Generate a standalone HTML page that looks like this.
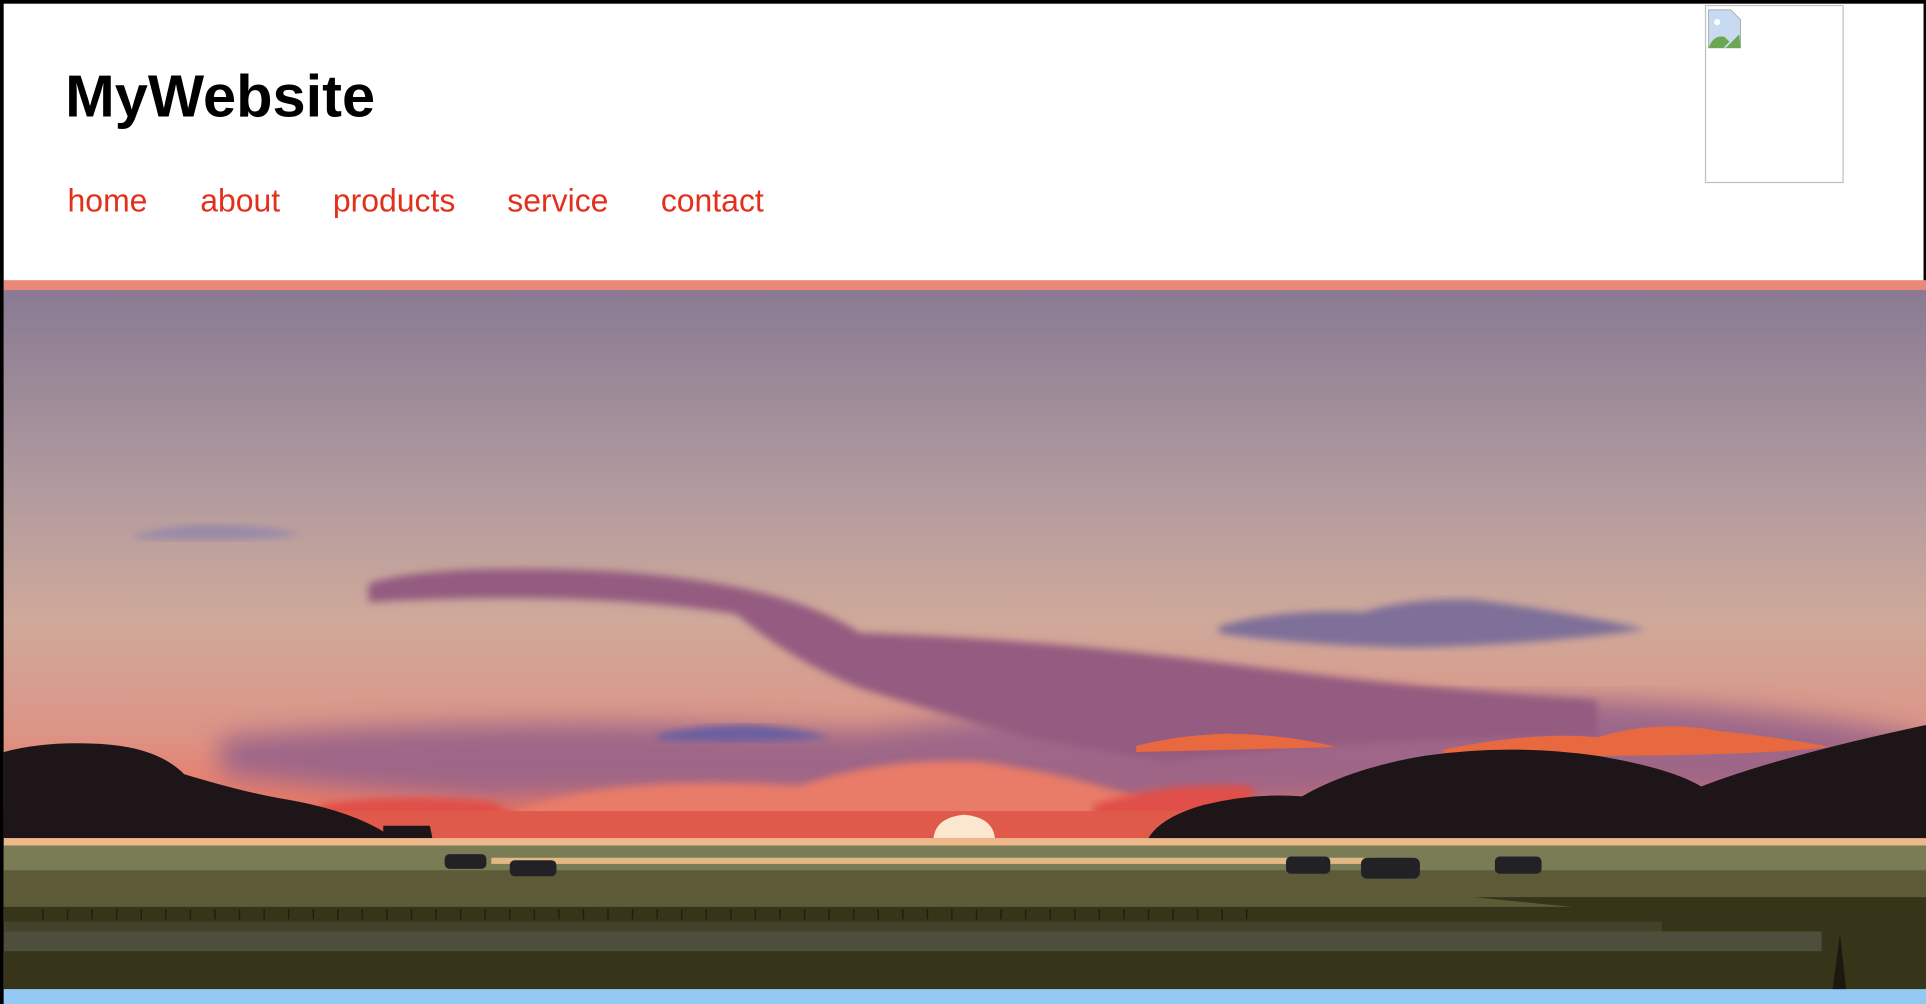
<!DOCTYPE html>
<html><head><meta charset="utf-8"><style>
html,body{margin:0;padding:0;width:1926px;height:1004px;overflow:hidden;background:#fff}
svg{display:block}
</style></head><body>
<svg width="1926" height="1004" viewBox="0 0 1568 817" preserveAspectRatio="none" xmlns="http://www.w3.org/2000/svg">
<defs>
<linearGradient id="sky" x1="0" y1="0" x2="0" y2="1">
<stop offset="0" stop-color="#897a93"/>
<stop offset="0.35" stop-color="#b09a9e"/>
<stop offset="0.6" stop-color="#cfa99a"/>
<stop offset="0.8" stop-color="#dc9486"/>
<stop offset="0.92" stop-color="#e87b68"/>
<stop offset="1" stop-color="#e15a4c"/>
</linearGradient>
<filter id="bl"><feGaussianBlur stdDeviation="3"/></filter>
<filter id="bl2"><feGaussianBlur stdDeviation="10"/></filter>
</defs>
<rect width="1568" height="817" fill="#fff"/>
<rect x="3" y="236" width="1565" height="450" fill="url(#sky)"/>
<path d="M180 600 Q400 580 700 595 Q1000 560 1300 570 Q1450 575 1568 600 L1568 650 Q1200 640 900 660 Q600 640 400 650 Q250 640 180 630Z" fill="#93608a" opacity="0.85" filter="url(#bl2)"/>
<path d="M300 475 Q350 458 500 465 Q640 475 700 515 Q850 520 1000 540 Q1150 560 1300 570 L1300 600 Q1100 600 950 620 L835 600 Q780 585 700 560 Q640 535 600 500 Q480 480 300 490Z" fill="#945b80" filter="url(#bl)"/>
<path d="M110 435 Q150 425 180 427 Q220 428 245 435 Q200 442 110 438Z" fill="#9a8aa8" filter="url(#bl)"/>
<path d="M992 510 Q1040 495 1110 498 Q1150 486 1200 488 Q1260 495 1340 512 Q1250 525 1150 527 Q1050 525 992 515Z" fill="#7f7099" filter="url(#bl)"/>
<path d="M535 598 Q570 590 610 590 Q650 592 675 600 Q620 606 535 602Z" fill="#6b5fa0" filter="url(#bl)"/>
<path d="M925 607 Q960 598 1000 597 Q1050 598 1088 608 L925 612Z" fill="#e8693f"/>
<path d="M1175 610 Q1250 595 1300 600 Q1350 585 1400 595 Q1450 600 1490 608 Q1400 618 1175 614Z" fill="#e8693f"/>
<path d="M420 660 Q500 630 650 640 Q720 615 800 620 Q870 630 930 650 L930 680 L420 680Z" fill="#e97c68" filter="url(#bl)"/>
<path d="M260 655 Q320 645 400 652 L430 670 L260 670Z" fill="#e0504a" filter="url(#bl)"/>
<path d="M890 655 Q950 635 1020 640 L1020 670 L890 670Z" fill="#e0504a" filter="url(#bl)"/>
<rect x="3" y="660" width="1565" height="22" fill="#e05a4b"/>
<path d="M760 682 Q762 665 785 663 Q808 665 810 682Z" fill="#fbe6d0"/>
<path d="M3 612 Q40 602 90 606 Q130 610 150 630 Q200 645 230 650 Q290 660 320 682 L3 682Z" fill="#1d1518"/>
<path d="M312 672 L350 672 L352 682 L312 682Z" fill="#1d1518"/>
<path d="M935 682 Q945 665 980 655 Q1020 645 1060 648 Q1100 625 1160 615 Q1230 605 1300 615 Q1360 625 1385 640 Q1450 615 1568 590 L1568 692 L935 692Z" fill="#1d1518"/>
<rect x="3" y="682" width="1565" height="8" fill="#eeb98a"/>
<rect x="3" y="688" width="1565" height="20" fill="#7a7c55"/>
<rect x="400" y="698" width="720" height="5" fill="#e2b884"/>
<rect x="3" y="708" width="1565" height="32" fill="#5c5a37"/>
<path d="M1200 730 L1568 730 L1568 745 L1350 745Z" fill="#363519"/>
<rect x="3" y="738" width="1565" height="67" fill="#363519"/>
<rect x="3" y="750" width="1350" height="8" fill="#42432a"/>
<rect x="3" y="758" width="1480" height="16" fill="#4d4f3c"/>
<g stroke="#1f1f12" stroke-width="1.2">
<path d="M35 740v8M55 740v8M75 740v8M95 740v8M115 740v8M135 740v8M155 740v8M175 740v8M195 740v8M215 740v8M235 740v8M255 740v8M275 740v8M295 740v8M315 740v8M335 740v8M355 740v8M375 740v8M395 740v8M415 740v8M435 740v8M455 740v8M475 740v8M495 740v8M515 740v8M535 740v8M555 740v8M575 740v8M595 740v8M615 740v8M635 740v8M655 740v8M675 740v8M695 740v8M715 740v8M735 740v8M755 740v8M775 740v8M795 740v8M815 740v8M835 740v8M855 740v8M875 740v8M895 740v8M915 740v8M935 740v8M955 740v8M975 740v8M995 740v8M1015 740v8"/>
</g>
<path d="M1492 805 L1498 760 L1503 805Z" fill="#1a1a10"/>
<g fill="#222226">
<rect x="362" y="695" width="34" height="12" rx="4"/>
<rect x="415" y="700" width="38" height="13" rx="4"/>
<rect x="1047" y="697" width="36" height="14" rx="4"/>
<rect x="1108" y="698" width="48" height="17" rx="5"/>
<rect x="1217" y="697" width="38" height="14" rx="4"/>
</g>
<rect x="3" y="805" width="1565" height="12" fill="#93c9f2"/>
<rect x="3" y="228" width="1565" height="8" fill="#e98878"/>
<rect x="0" y="0" width="1568" height="3" fill="#000"/>
<rect x="0" y="0" width="3" height="817" fill="#000"/>
<rect x="1566" y="0" width="2" height="228" fill="#000"/>
<text x="53" y="95" font-family="Liberation Sans, Arial, sans-serif" font-weight="bold" font-size="48.5" fill="#000">MyWebsite</text>
<g font-family="Liberation Sans, Arial, sans-serif" font-size="26" fill="#e3301c">
<text x="55" y="172">home</text>
<text x="163" y="172">about</text>
<text x="271" y="172">products</text>
<text x="413" y="172">service</text>
<text x="538" y="172">contact</text>
</g>
<rect x="1388.5" y="4.5" width="112" height="144" fill="#fff" stroke="#c0c0c0" stroke-width="1"/>
<path d="M1391 8 L1409 8 L1417 16 L1417 39 L1391 39Z" fill="#c8daf2" stroke="#999" stroke-width="0.6"/>
<path d="M1391 39 Q1395 28 1404 30 L1408 34 L1403 39Z" fill="#6aa84f"/>
<path d="M1405 39 L1416 28 L1417 39Z" fill="#6aa84f"/>
<circle cx="1398" cy="18" r="2.5" fill="#fff"/>
</svg>
</body></html>
